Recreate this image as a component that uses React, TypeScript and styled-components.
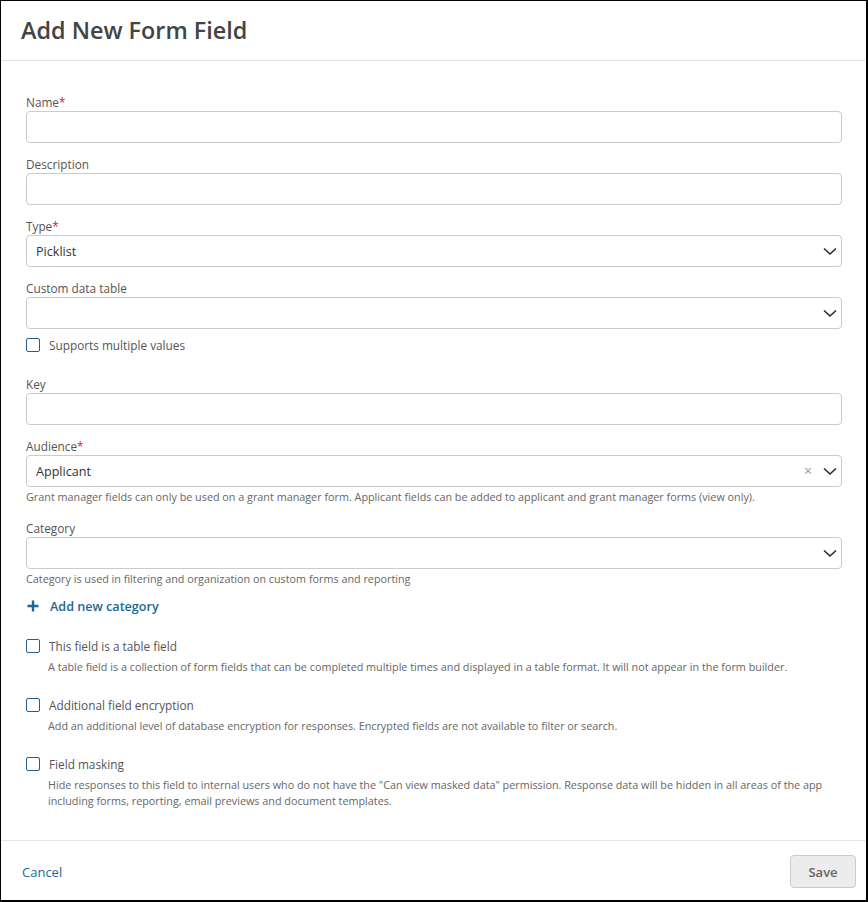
import React from "react";
import styled, { createGlobalStyle } from "styled-components";

const GlobalStyle = createGlobalStyle`
  * { box-sizing: border-box; }
  body {
    margin: 0;
    font-family: "Open Sans", "Liberation Sans", sans-serif;
    background: #fff;
  }
`;

const Modal = styled.div`
  width: 868px;
  height: 902px;
  border-style: solid;
  border-color: #000;
  border-width: 1px 2px 2px 1px;
  background: #fff;
  display: flex;
  flex-direction: column;
`;

const Header = styled.div`
  height: 60px;
  border-bottom: 1px solid #e6e6e6;
  display: flex;
  align-items: center;
  padding: 0 20px 1px;

  h1 {
    margin: 0;
    font-size: 23.4px;
    font-weight: 600;
    color: #444;
  }
`;

const Body = styled.div`
  flex: 1;
  padding: 32px 24px 0 25px;
`;

const Field = styled.div<{ $mb?: number }>`
  margin-bottom: ${(p) => (p.$mb ?? 12)}px;
`;

const Label = styled.label`
  display: block;
  font-size: 11.8px;
  line-height: 18px;
  color: #555;

  span {
    color: #e0201b;
  }
`;

const Input = styled.div`
  height: 32px;
  border: 1px solid #cbcbcb;
  border-radius: 4px;
  background: #fff;
`;

const SelectBox = styled(Input)`
  display: flex;
  align-items: center;
  padding: 0 2px 0 9px;
  font-size: 12.6px;
  color: #333;

  .value {
    flex: 1;
  }
  .clear {
    color: #999;
    font-size: 14px;
    margin-right: 9px;
    line-height: 1;
  }
`;

const CheckRow = styled.div<{ $mt?: number; $mb?: number }>`
  display: flex;
  align-items: center;
  height: 18px;
  margin-top: ${(p) => p.$mt ?? 0}px;
  margin-bottom: ${(p) => p.$mb ?? 0}px;
  font-size: 11.8px;
  color: #555;
  gap: 9px;
`;

const Box = styled.span`
  width: 14px;
  height: 14px;
  border: 1.5px solid #245f8c;
  border-radius: 2px;
  flex-shrink: 0;
`;

const Help = styled.div<{ $indent?: boolean; $mt?: number; $mb?: number }>`
  font-size: 10.8px;
  line-height: 16px;
  color: #666;
  padding-left: ${(p) => (p.$indent ? 22 : 0)}px;
  margin-top: ${(p) => p.$mt ?? 2}px;
  margin-bottom: ${(p) => p.$mb ?? 0}px;
`;

const AddLink = styled.div`
  display: flex;
  align-items: center;
  gap: 11px;
  height: 20px;
  margin-top: 9px;
  font-size: 12.6px;
  font-weight: 600;
  color: #1d6796;
`;

const Option = styled.div`
  margin-top: 21px;
`;

const Footer = styled.div`
  border-top: 1px solid #e6e6e6;
  padding: 14px 10px 12px 21px;
  display: flex;
  align-items: center;
  justify-content: space-between;
`;

const Cancel = styled.a`
  font-size: 13px;
  color: #1d6796;
  cursor: pointer;
`;

const SaveButton = styled.button`
  width: 66px;
  height: 33px;
  background: #ececec;
  border: 1px solid #cbcbcb;
  border-radius: 4px;
  font-family: inherit;
  font-size: 13px;
  font-weight: 600;
  color: #666;
`;

const Chevron = () => (
  <svg width="18" height="12" viewBox="0 0 18 12">
    <path d="M3 3.5 L9 9 L15 3.5" fill="none" stroke="#2b2b2b" strokeWidth="1.6" />
  </svg>
);

const Plus = () => (
  <svg width="12" height="12" viewBox="0 0 12 12" style={{ marginLeft: 1 }}>
    <path d="M6 0.5 V11.5 M0.5 6 H11.5" stroke="#1d6796" strokeWidth="2.4" />
  </svg>
);

const Req = () => <span>*</span>;

const Select = ({ value, clearable }: { value?: string; clearable?: boolean }) => (
  <SelectBox>
    <span className="value">{value}</span>
    {clearable && <span className="clear">×</span>}
    <Chevron />
  </SelectBox>
);

const options = [
  {
    title: "This field is a table field",
    help: "A table field is a collection of form fields that can be completed multiple times and displayed in a table format. It will not appear in the form builder.",
  },
  {
    title: "Additional field encryption",
    help: "Add an additional level of database encryption for responses. Encrypted fields are not available to filter or search.",
  },
  {
    title: "Field masking",
    help: 'Hide responses to this field to internal users who do not have the "Can view masked data" permission. Response data will be hidden in all areas of the app including forms, reporting, email previews and document templates.',
  },
];

const App = () => {
  return (
    <>
      <GlobalStyle />
      <Modal>
        <Header>
          <h1>Add New Form Field</h1>
        </Header>
        <Body>
          <Field>
            <Label>
              Name<Req />
            </Label>
            <Input />
          </Field>
          <Field>
            <Label>Description</Label>
            <Input />
          </Field>
          <Field>
            <Label>
              Type<Req />
            </Label>
            <Select value="Picklist" />
          </Field>
          <Field $mb={0}>
            <Label>Custom data table</Label>
            <Select />
          </Field>
          <CheckRow $mt={7} $mb={21}>
            <Box />
            Supports multiple values
          </CheckRow>
          <Field>
            <Label>Key</Label>
            <Input />
          </Field>
          <Field $mb={0}>
            <Label>
              Audience<Req />
            </Label>
            <Select value="Applicant" clearable />
          </Field>
          <Help $mb={14}>
            Grant manager fields can only be used on a grant manager form. Applicant fields can be added to applicant
            and grant manager forms (view only).
          </Help>
          <Field $mb={0}>
            <Label>Category</Label>
            <Select />
          </Field>
          <Help>Category is used in filtering and organization on custom forms and reporting</Help>
          <AddLink>
            <Plus />
            Add new category
          </AddLink>
          {options.map((o) => (
            <Option key={o.title}>
              <CheckRow>
                <Box />
                {o.title}
              </CheckRow>
              <Help $indent $mt={4}>
                {o.help}
              </Help>
            </Option>
          ))}
        </Body>
        <Footer>
          <Cancel>Cancel</Cancel>
          <SaveButton>Save</SaveButton>
        </Footer>
      </Modal>
    </>
  );
};

export default App;
